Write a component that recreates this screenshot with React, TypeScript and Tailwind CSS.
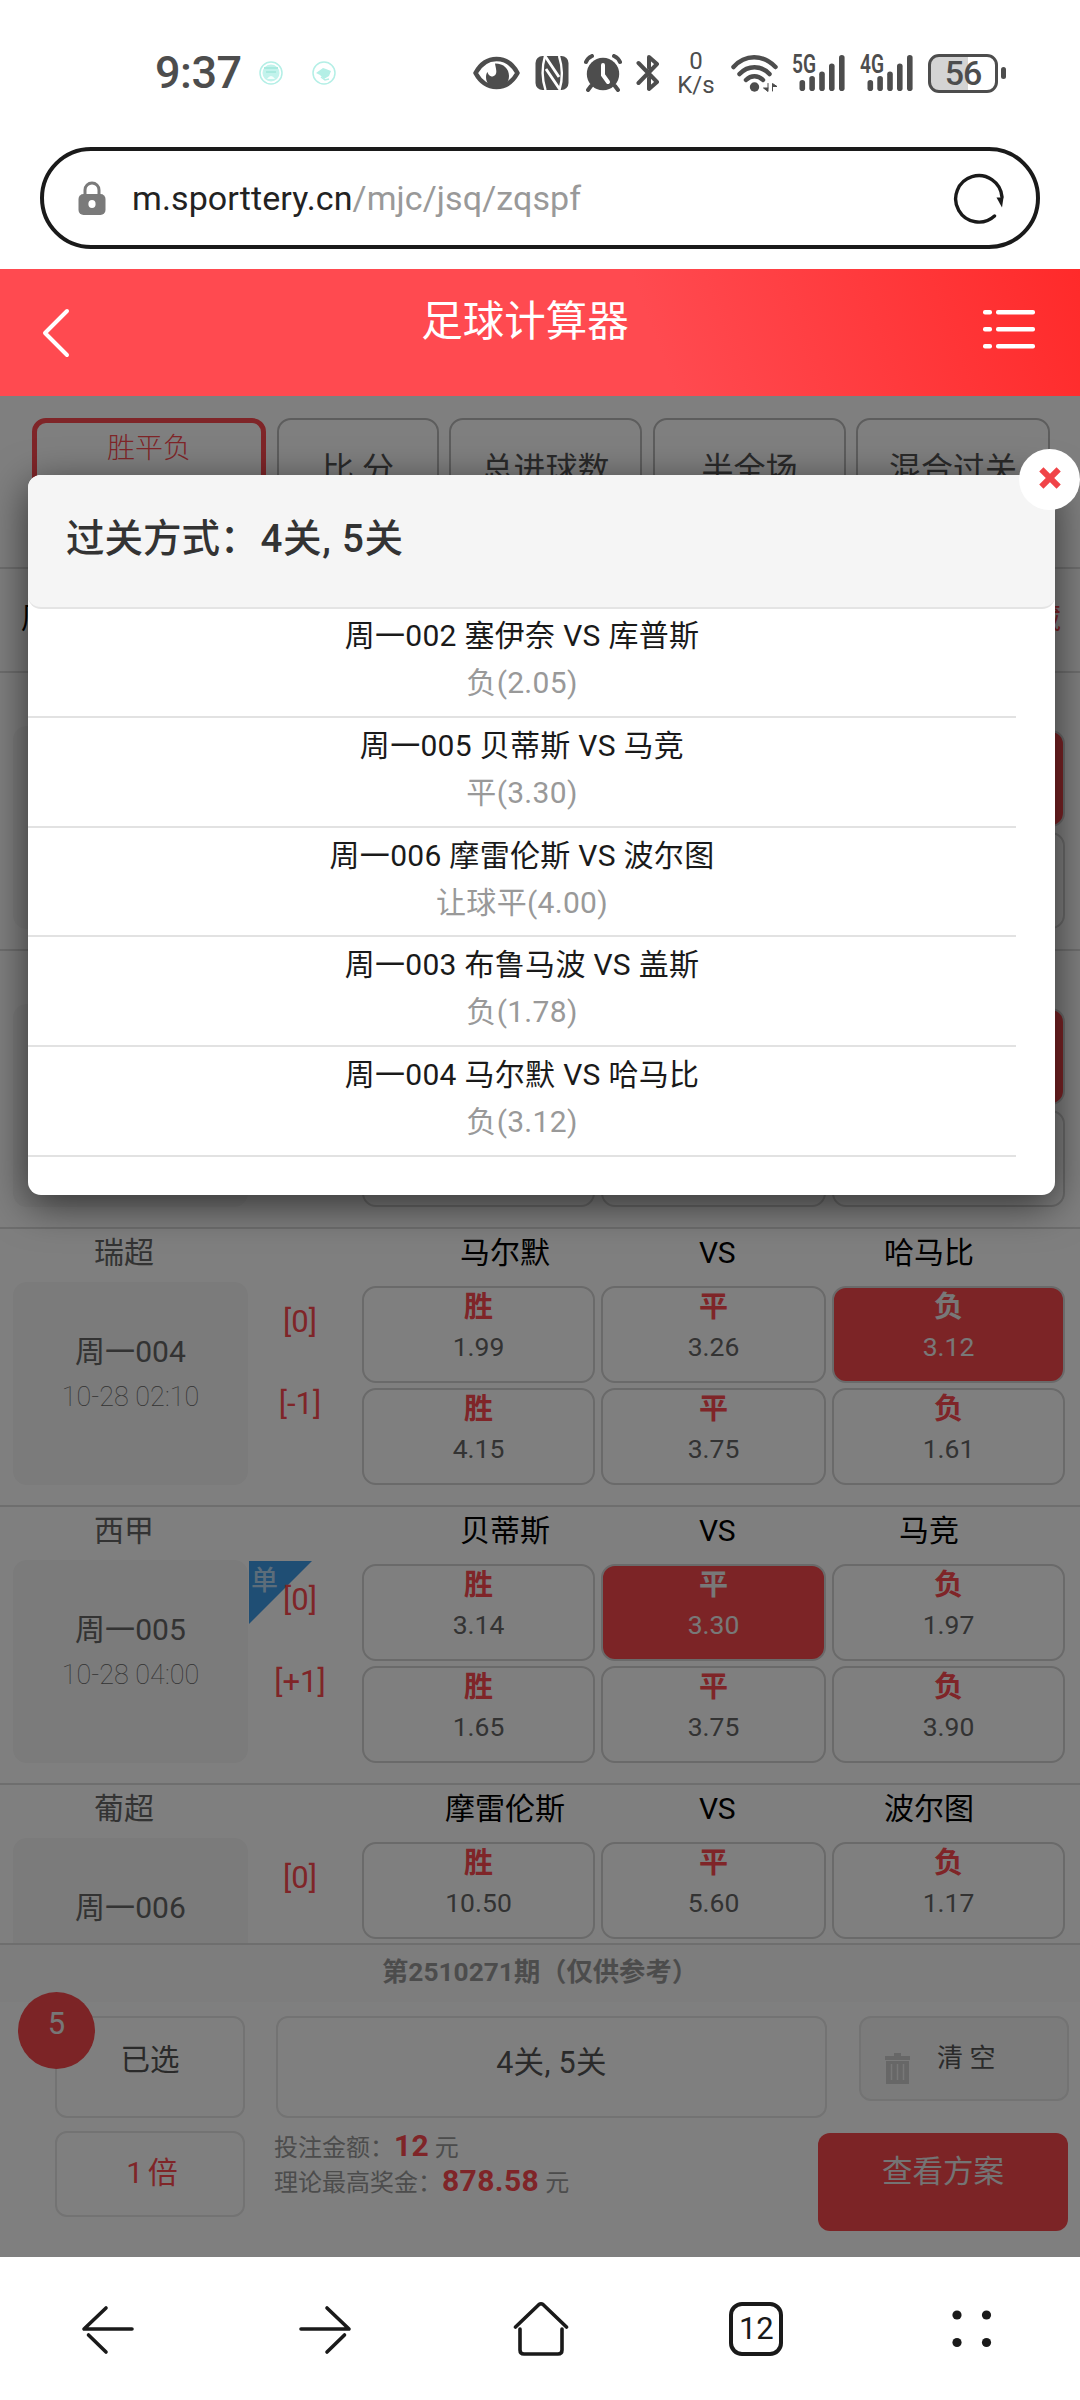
import type { ReactNode } from 'react';
import clsx from 'clsx';

type Odd = { value?: string; active?: boolean };

type Match = {
  league?: string;
  home?: string;
  away?: string;
  code?: string;
  time?: string;
  single?: boolean;
  handicaps?: string[];
  odds: Odd[];
};

// the first two rows sit under the dialog, only their boxes stick out
const matches: Match[] = [
  { odds: [{}, {}, { active: true }, {}, {}, {}] },
  { odds: [{}, {}, { active: true }, {}, {}, {}] },
  {
    league: '瑞超',
    home: '马尔默',
    away: '哈马比',
    code: '周一004',
    time: '10-28 02:10',
    handicaps: ['[0]', '[-1]'],
    odds: [
      { value: '1.99' },
      { value: '3.26' },
      { value: '3.12', active: true },
      { value: '4.15' },
      { value: '3.75' },
      { value: '1.61' },
    ],
  },
  {
    league: '西甲',
    home: '贝蒂斯',
    away: '马竞',
    code: '周一005',
    time: '10-28 04:00',
    single: true,
    handicaps: ['[0]', '[+1]'],
    odds: [
      { value: '3.14' },
      { value: '3.30', active: true },
      { value: '1.97' },
      { value: '1.65' },
      { value: '3.75' },
      { value: '3.90' },
    ],
  },
  {
    league: '葡超',
    home: '摩雷伦斯',
    away: '波尔图',
    code: '周一006',
    handicaps: ['[0]'],
    odds: [{ value: '10.50' }, { value: '5.60' }, { value: '1.17' }],
  },
];

const picks = [
  { title: '周一002 塞伊奈 VS 库普斯', pick: '负(2.05)' },
  { title: '周一005 贝蒂斯 VS 马竞', pick: '平(3.30)' },
  { title: '周一006 摩雷伦斯 VS 波尔图', pick: '让球平(4.00)' },
  { title: '周一003 布鲁马波 VS 盖斯', pick: '负(1.78)' },
  { title: '周一004 马尔默 VS 哈马比', pick: '负(3.12)' },
];

const outcomes = ['胜', '平', '负'];

const Signal = ({ label }: { label: string }) => (
  <svg className="h-[52px] w-[54px] shrink-0" viewBox="0 -6 54 52" fill="#4d4d4d">
    <text x="0" y="20" fontSize="25.500" fontWeight="600" textLength="24" lengthAdjust="spacingAndGlyphs">
      {label}
    </text>
    <rect x="7.5" y="27" width="5.6" height="11" rx="2.8" />
    <rect x="17.3" y="23" width="5.6" height="15" rx="2.8" />
    <rect x="27.2" y="18.5" width="5.6" height="19.5" rx="2.8" />
    <rect x="37" y="10.5" width="5.6" height="27.5" rx="2.8" />
    <rect x="47" y="2" width="5.6" height="36" rx="2.8" />
  </svg>
);

const StatusBar = () => (
  <div className="flex h-[146px] items-center pl-[155px] text-[#4d4d4d]">
    <span className="w-[87px] shrink-0 text-[45px] font-medium leading-[60px] tracking-[-0.5px]">9:37</span>
    <svg className="ml-[17px] size-[24px] shrink-0" viewBox="0 0 24 24" fill="none" stroke="#b4efe6" strokeWidth="1.500">
      <circle cx="12" cy="12" r="11" />
      <circle cx="12" cy="12" r="8.500" fill="#c2f3ec" stroke="none" />
      <path d="M5 7h14M7 11h10" stroke="#a8eadf" strokeWidth="2" />
      <path d="M8 18q4-6 8 0z" fill="#f4fffd" stroke="none" />
    </svg>
    <svg className="ml-[29px] size-[24px] shrink-0" viewBox="0 0 24 24" fill="none" stroke="#b4efe6" strokeWidth="1.500">
      <circle cx="12" cy="12" r="11" />
      <path d="M4 12l7-5 3 1 5 2-2 5-5 3-4-4z" fill="#b4efe6" stroke="none" />
      <path d="M9 16l4 3 4-1" />
    </svg>
    <svg className="ml-[137px] h-[34px] w-[48px] shrink-0" viewBox="0 0 48 34" fill="none" stroke="#4d4d4d">
      <path
        d="M2.500 17C8 7 15 3 23.500 3S39 7 44.500 17C39 27 32 31 23.500 31S8 27 2.500 17z"
        strokeWidth="4.500"
        strokeLinejoin="round"
      />
      <path
        d="M22 7.500C31 7.500 36 13 36 20c0 7-5 12-12 12s-11-5-11-11c0-2 .5-4 1.500-5 .5 2 1.500 4 4 4.500 3.500 0 5-2.500 4.800-5.500-.2-3-1-5-1.300-7.500z"
        fill="#4d4d4d"
        stroke="none"
      />
    </svg>
    <svg className="ml-[14px] h-[36px] w-[34px] shrink-0" viewBox="0 0 34 36">
      <rect x="0.500" y="1" width="33" height="34" rx="7" fill="#4d4d4d" />
      <g stroke="#fff" strokeWidth="2.400" fill="none">
        <path d="M10 1Q5 18 10.500 35M24 1Q29.500 18 24.500 35" />
        <path d="M10 1L24 22M11 14l13.500 20" strokeWidth="2.800" />
      </g>
    </svg>
    <svg
      className="ml-[15px] h-[38px] w-[38px] shrink-0"
      viewBox="0 0 38 38"
      fill="none"
      stroke="#4d4d4d"
      strokeLinecap="round"
    >
      <circle cx="19" cy="20" r="16.200" fill="#4d4d4d" stroke="none" />
      <path d="M2 8Q3.500 4 8 2M36 8Q34.500 4 30 2M7 32l-3 4M31 32l3 4" strokeWidth="4" />
      <path d="M19 11v10l5 7" stroke="#fff" strokeWidth="4" />
    </svg>
    <svg
      className="ml-[14px] h-[38px] w-[24px] shrink-0"
      viewBox="0 0 24 38"
      fill="none"
      stroke="#4d4d4d"
      strokeWidth="4"
      strokeLinecap="round"
      strokeLinejoin="round"
    >
      <path d="M2.500 9L21 28l-8 7V24M13 14V3l8 7L2.500 29" />
    </svg>
    <div className="ml-[17px] flex h-[46px] w-[38px] shrink-0 flex-col items-center justify-between text-[24px] leading-[22px]">
      <span>0</span>
      <span>K/s</span>
    </div>
    <svg
      className="ml-[16px] h-[38px] w-[48px] shrink-0"
      viewBox="0 0 48 38"
      fill="none"
      stroke="#4d4d4d"
      strokeWidth="4.500"
      strokeLinecap="round"
    >
      <path d="M2.500 13C14 0 32 0 44.500 13M8.500 20c8.500-9 21.500-9 30 0M15 26c5-5 12-5 17 0" />
      <circle cx="23.500" cy="33" r="4.700" fill="#4d4d4d" stroke="none" />
      <path d="M37 29.500v8l-4.500-3.500h4.500M41.500 37v-7.500l4.500 3h-4.500" fill="#4d4d4d" strokeWidth="1" />
    </svg>
    <div className="ml-[13px] flex">
      <Signal label="5G" />
    </div>
    <div className="ml-[14px] flex">
      <Signal label="4G" />
    </div>
    <div className="ml-[14px] flex shrink-0 items-center gap-[3px]">
      <div className="flex h-[39px] w-[70px] items-center justify-center rounded-[11px] border-[3px] border-[#4d4d4d] bg-linear-to-r from-[#d4d4d4] from-58% to-white to-58% text-[34px] font-medium leading-none tracking-[-1px]">
        56
      </div>
      <div className="h-[12px] w-[5px] rounded-full bg-[#4d4d4d]" />
    </div>
  </div>
);

const AddressBar = () => (
  <div className="mx-[40px] mt-px flex h-[102px] items-center rounded-full border-4 border-[#1a1a1a] pl-[34px] pr-[31px]">
    <svg className="h-[34px] w-[28px]" viewBox="0 0 28 34" fill="none">
      <path d="M7 15V9a7 7 0 0 1 14 0v6" stroke="#7a7a7a" strokeWidth="3" />
      <rect x="0.500" y="13" width="27" height="21" rx="5" fill="#7a7a7a" />
      <ellipse cx="14" cy="23" rx="3.600" ry="4" fill="#fff" />
    </svg>
    <p className="ml-[26px] flex-1 whitespace-nowrap text-[34px] leading-[44px] tracking-[0.1px] text-[#222]">
      m.sporttery.cn<span className="text-[#999]">/mjc/jsq/zqspf</span>
    </p>
    <svg className="size-[52px]" viewBox="0 0 52 52" fill="none">
      <path d="M41.500 44A23.200 23.200 0 1 1 49 25" stroke="#1a1a1a" strokeWidth="3.400" strokeLinecap="round" />
      <path d="M43.500 25.500h7L49 35.500z" fill="#1a1a1a" />
    </svg>
  </div>
);

const TitleBar = () => (
  <header className="mt-[20px] flex h-[127px] items-start bg-linear-[70deg] from-[#ff4a50] from-60% to-[#ff2a2a] text-white">
    <svg className="ml-[39px] mt-[38px] h-[52px] w-[34px]" viewBox="0 0 34 52" fill="none">
      <path d="M28 4L6 26l22 22" stroke="#fff" strokeWidth="4" strokeLinecap="round" strokeLinejoin="round" />
    </svg>
    <h1 className="ml-[-9px] mt-[23px] w-[922px] text-center text-[41.500px] leading-[60px]">足球计算器</h1>
    <svg className="ml-[-4px] mt-[39px] h-[42px] w-[54px]" viewBox="0 0 54 42" fill="#fff">
      {[2, 19, 36].map((y) => (
        <g key={y}>
          <rect x="1" y={y} width="9" height="4.500" rx="2" />
          <rect x="14" y={y} width="39" height="4.500" rx="2" />
        </g>
      ))}
    </svg>
  </header>
);

const Tab = ({ className, children }: { className: string; children: ReactNode }) => (
  <div
    className={clsx(
      'h-[130px] rounded-[14px] border-2 border-[#bbb] pt-[25px] text-center text-[32px] leading-[48px] text-[#555]',
      className,
    )}
  >
    {children}
  </div>
);

const Tabs = () => (
  <nav className="flex h-[171px] items-start pl-[32px] pt-[22px]">
    <div className="mr-[11px] h-[130px] w-[234px] rounded-[14px] border-[5px] border-[#ff4a50] pt-[6px] text-center text-[28px] font-light leading-[40px] text-[#ff4a50]">
      胜平负
    </div>
    <Tab className="mr-[10px] w-[162px]">比 分</Tab>
    <Tab className="mr-[11px] w-[193px]">总进球数</Tab>
    <Tab className="mr-[10px] w-[193px]">半全场</Tab>
    <Tab className="w-[194px]">混合过关</Tab>
  </nav>
);

const MatchRow = ({ match }: { match: Match }) => (
  <section className="h-[278px] border-t-2 border-[#dcdcdc]">
    <div className="flex h-[48px] items-center text-[30px] leading-[46px] text-black">
      <span className="w-[248px] text-center text-[#666]">{match.league}</span>
      <span className="ml-[151px] w-[212px] text-center">{match.home}</span>
      <span className="w-[212px] text-center tracking-[-0.5px]">{match.home && 'VS'}</span>
      <span className="w-[212px] text-center">{match.away}</span>
    </div>
    <div className="flex">
      <div className="ml-[13px] mt-[5px] h-[203px] w-[235px] rounded-[14px] bg-[#f6f6f6] pt-[48px] text-center">
        <p className="text-[30px] leading-[44px] tracking-[0.1px] text-[#666]">{match.code}</p>
        <p className="text-[27px] font-thin leading-[46px] text-[#666]">{match.time}</p>
      </div>
      <div className="relative mt-[4px] w-[114px] pr-[10px] text-center text-[31px] leading-[82px] text-[#ff4a50]">
        {match.single && (
          <div className="absolute left-px top-[2px] h-[63px] w-[63px] bg-[#3e9ce9] text-[27px] font-medium leading-[46px] text-[#b9daf4] [clip-path:polygon(0_0,100%_0,0_100%)]">
            <span className="absolute left-[2px] top-[-3px]">单</span>
          </div>
        )}
        {match.handicaps?.map((handicap) => (
          <p key={handicap} className="relative">
            {handicap}
          </p>
        ))}
      </div>
      <div className="mt-[9px] grid grid-cols-[233px_225px_233px] gap-x-[6px] gap-y-[5px]">
        {match.odds.map((odd, i) => (
          <div
            key={i}
            className={clsx(
              'h-[97px] rounded-[14px] border-2 border-[#d4d4d4] text-center',
              odd.active ? 'bg-[#f8484c] text-[#f0f0f0]' : 'text-[#666]',
            )}
          >
            {odd.value && (
              <>
                <p
                  className={clsx(
                    'text-[29px] font-bold leading-[38px]',
                    odd.active ? 'text-[#f0f0f0]' : 'text-[#ff4a50]',
                  )}
                >
                  {outcomes[i % 3]}
                </p>
                <p className="text-[26.500px] leading-[42px]">{odd.value}</p>
              </>
            )}
          </div>
        ))}
      </div>
    </div>
  </section>
);

const BetFooter = () => (
  <footer className="h-[314px]">
    <p className="h-[59px] border-t-2 border-[#dcdcdc] bg-[#fafafa] text-center text-[26.300px] font-bold leading-[55px] text-[#999]">
      第2510271期（仅供参考）
    </p>
    <div className="mt-[14px] flex h-[102px] items-start pl-[55px] text-[29.500px] text-[#555]">
      <div className="relative h-[102px] w-[190px] rounded-[12px] border-2 border-[#e6e6e6] text-center leading-[84px]">
        已选
        <span className="absolute left-[-39px] top-[-26px] size-[77px] rounded-full bg-[#f8484c] text-[31px] leading-[63px] text-[#eee]">
          5
        </span>
      </div>
      <div className="ml-[31px] h-[102px] w-[551px] rounded-[12px] border-2 border-[#e6e6e6] text-center text-[30.500px] leading-[90px] tracking-[0.3px]">
        4关, 5关
      </div>
      <div className="ml-[32px] flex h-[85px] w-[210px] items-start rounded-[12px] border-2 border-[#e6e6e6] bg-[#f6f6f6] pl-[24px]">
        <svg className="mt-[34px] h-[32px] w-[25px]" viewBox="0 0 25 32" fill="#cfcfcf">
          <path d="M9 1h7v3h9v4H0V4h9zM1 9h23v23H1z" />
          <path d="M6.500 12v16M12.500 12v16M18.500 12v16" stroke="#f0f0f0" strokeWidth="1.500" />
        </svg>
        <span className="ml-[27px] text-[26px] leading-[80px]">清 空</span>
      </div>
    </div>
    <div className="mt-[13px] flex items-start pl-[55px]">
      <div className="h-[86px] w-[190px] rounded-[12px] border-2 border-[#e6e6e6] pl-[4px] text-center text-[30px] leading-[80px] text-[#ff4a50] [word-spacing:-3px]">
        1 倍
      </div>
      <div className="ml-[29px] w-[544px] text-[24px] text-[#999]">
        <p className="h-[35px] leading-[33px]">
          投注金额：<b className="text-[30px] leading-none tracking-[0.2px] text-[#ff4a50]">12</b> 元
        </p>
        <p className="h-[35px] leading-[33px]">
          理论最高奖金：<b className="text-[30px] leading-none tracking-[0.4px] text-[#ff4a50]">878.58</b> 元
        </p>
      </div>
      <button className="mt-[2px] h-[98px] w-[250px] rounded-[12px] bg-[#f8484c] pb-[20px] text-[30.500px] leading-[78px] text-[#e8e8e8]">
        查看方案
      </button>
    </div>
  </footer>
);

const PassDialog = () => (
  <div className="absolute left-[28px] top-[79px] h-[720px] w-[1027px] rounded-[13px] bg-white shadow-[0_10px_40px_rgba(0,0,0,0.6)]">
    <h2 className="h-[134px] whitespace-nowrap rounded-[13px] border-b-2 border-[#e4e4e4] bg-[#f5f5f5] pl-[38px] text-[38.500px] font-medium leading-[128px] text-[#333]">
      过关方式：<span className="ml-[2px] tracking-[0.7px]">4关, 5关</span>
    </h2>
    <ul className="-mt-px w-[988px] text-center text-[30px] tracking-[0.300px]">
      {picks.map((item) => (
        <li key={item.title} className="h-[109.800px] border-b-2 border-[#e2e2e2] pt-[4px]">
          <p className="leading-[47px] text-[#1a1a1a]">{item.title}</p>
          <p className="leading-[48px] text-[#999]">{item.pick}</p>
        </li>
      ))}
    </ul>
    <button className="absolute right-[-25px] top-[-26px] flex size-[61px] items-center justify-center rounded-full bg-white">
      <svg className="mb-[3px] size-[26px]" viewBox="0 0 24 24">
        <path d="M4 4l16 16M20 4L4 20" stroke="#f04448" strokeWidth="5.500" />
      </svg>
    </button>
  </div>
);

const BrowserNav = () => (
  <div className="flex h-[143px] items-center justify-around bg-white text-[#1a1a1a]">
    <svg className="size-[56px]" viewBox="0 0 56 56" fill="none" stroke="#1a1a1a" strokeWidth="3.600" strokeLinecap="round" strokeLinejoin="round">
      <path d="M26 7L4 28h48M8.500 34L26 51" />
    </svg>
    <svg className="size-[56px]" viewBox="0 0 56 56" fill="none" stroke="#1a1a1a" strokeWidth="3.600" strokeLinecap="round" strokeLinejoin="round">
      <path d="M30 7l22 21H4M47.500 34L30 51" />
    </svg>
    <svg className="size-[56px]" viewBox="0 0 56 56" fill="none" stroke="#1a1a1a" strokeWidth="3.600" strokeLinecap="round" strokeLinejoin="round">
      <path d="M2.500 26L26 3.500q2-1.500 4 0L53.500 26M7 28v21q0 4 4 4h34q4 0 4-4V28" />
    </svg>
    <div className="flex size-[54px] items-center justify-center rounded-[13px] border-4 border-[#1a1a1a] text-[31px] leading-none">
      12
    </div>
    <svg className="size-[56px]" viewBox="0 0 56 56" fill="#1a1a1a">
      <circle cx="13" cy="14" r="4.600" />
      <circle cx="42.500" cy="14" r="4.600" />
      <circle cx="13" cy="41.500" r="4.600" />
      <circle cx="42.500" cy="41.500" r="4.600" />
    </svg>
  </div>
);

export default function App() {
  return (
    <div className="h-[2400px] w-[1080px] overflow-hidden bg-white font-['Roboto','Noto_Sans_CJK_SC',sans-serif]">
      <StatusBar />
      <AddressBar />
      <TitleBar />
      <main className="relative h-[1861px] overflow-hidden bg-white">
        <Tabs />
        <div className="flex h-[104px] items-center justify-between border-t-2 border-[#dcdcdc] pl-[21px] pr-[19px] text-[29px] text-black">
          <span>周</span>
          <span className="text-[#ff4a50]">藏</span>
        </div>
        <div className="h-[1272px] overflow-hidden">
          {matches.map((match, i) => (
            <MatchRow key={i} match={match} />
          ))}
        </div>
        <BetFooter />
        <div className="absolute inset-0 bg-black/50" />
        <PassDialog />
      </main>
      <BrowserNav />
    </div>
  );
}
